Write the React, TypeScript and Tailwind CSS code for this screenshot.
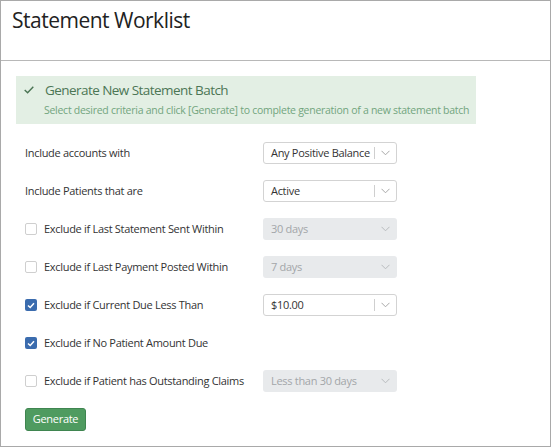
import React from 'react';

interface SelectProps {
  value: string;
  disabled?: boolean;
}

const Chevron = ({ color }: { color: string }) => (
  <svg width="9" height="6" viewBox="0 0 9 6" fill="none">
    <path d="M0.5 0.8 L4.5 4.8 L8.5 0.8" stroke={color} strokeWidth="1" />
  </svg>
);

const Select = ({ value, disabled }: SelectProps): JSX.Element => {
  if (disabled) {
    return (
      <div className="flex h-[22px] w-[134px] items-center justify-between rounded-[3px] bg-[#e8eaec] pl-[8px] pr-[7px] text-[11px] tracking-[-0.3px] text-[#a3a6a9]">
        <span>{value}</span>
        <Chevron color="#b8bbbe" />
      </div>
    );
  }
  return (
    <div className="flex h-[22px] w-[134px] items-center justify-between rounded-[3px] border border-[#d3d3d3] bg-white pl-[7px] pr-[6px] text-[11px] tracking-[-0.3px] text-[#333]">
      <span>{value}</span>
      <span className="flex items-center gap-[6px]">
        <span className="h-[12px] w-px bg-[#cfcfcf]"></span>
        <Chevron color="#a8a8a8" />
      </span>
    </div>
  );
};

const Checkbox = ({ checked }: { checked?: boolean }) =>
  checked ? (
    <span className="flex h-[12px] w-[12px] items-center justify-center rounded-[2px] bg-[#3b6cae]">
      <svg width="8" height="7" viewBox="0 0 8 7" fill="none">
        <path d="M1 3.5 L3.2 5.5 L7 1.2" stroke="white" strokeWidth="1.5" />
      </svg>
    </span>
  ) : (
    <span className="h-[12px] w-[12px] rounded-[2px] border border-[#cfcfcf] bg-white"></span>
  );

const rows: { label: string; check?: boolean; checked?: boolean; value?: string; disabled?: boolean }[] = [
  { label: 'Include accounts with', value: 'Any Positive Balance' },
  { label: 'Include Patients that are', value: 'Active' },
  { label: 'Exclude if Last Statement Sent Within', check: true, value: '30 days', disabled: true },
  { label: 'Exclude if Last Payment Posted Within', check: true, value: '7 days', disabled: true },
  { label: 'Exclude if Current Due Less Than', check: true, checked: true, value: '$10.00' },
  { label: 'Exclude if No Patient Amount Due', check: true, checked: true },
  { label: 'Exclude if Patient has Outstanding Claims', check: true, value: 'Less than 30 days', disabled: true },
];

const App = (): JSX.Element => {
  return (
    <div
      className="h-[447px] w-[551px] overflow-hidden border border-[#a9a9a9] bg-white text-[#333]"
      style={{ fontFamily: '"Open Sans", sans-serif' }}
    >
      <header className="h-[60px] border-b border-[#b8b8b8] px-[11px] pt-[4px]">
        <h1 className="text-[21px] leading-[30px] tracking-[-0.5px] text-[#222]">Statement Worklist</h1>
      </header>
      <section className="px-[15px] pt-[15px]">
        <div className="flex h-[48px] w-[460px] flex-col bg-[#e3efe4] pl-[8px] pt-[4px]">
          <div className="flex h-[20px] items-center gap-[11px]">
            <svg width="10" height="8" viewBox="0 0 10 8" fill="none">
              <path d="M0.7 4 L3.6 6.8 L9.3 0.8" stroke="#4a7453" strokeWidth="1.4" />
            </svg>
            <span className="text-[13.5px] leading-[20px] tracking-[-0.55px] text-[#4c7655]">
              Generate New Statement Batch
            </span>
          </div>
          <p className="mt-[2px] whitespace-nowrap pl-[20px] text-[10.5px] leading-[16px] tracking-[-0.27px] text-[#72a57e]">
            Select desired criteria and click [Generate] to complete generation of a new statement batch
          </p>
        </div>
        <div className="mt-[10px] pl-[9px]">
          {rows.map((row, index) => (
            <div key={index} className="grid h-[38px] grid-cols-[238px_134px] items-center">
              <div className="flex items-center gap-[7px] whitespace-nowrap text-[11px] tracking-[-0.3px] text-[#333]">
                {row.check && <Checkbox checked={row.checked} />}
                <span>{row.label}</span>
              </div>
              {row.value && <Select value={row.value} disabled={row.disabled} />}
            </div>
          ))}
          <button className="mt-[8px] h-[23px] w-[61px] rounded-[3px] border border-[#3f8550] bg-[#4f9b60] text-[11px] tracking-[-0.3px] text-white">
            Generate
          </button>
        </div>
      </section>
    </div>
  );
};

export default App;
